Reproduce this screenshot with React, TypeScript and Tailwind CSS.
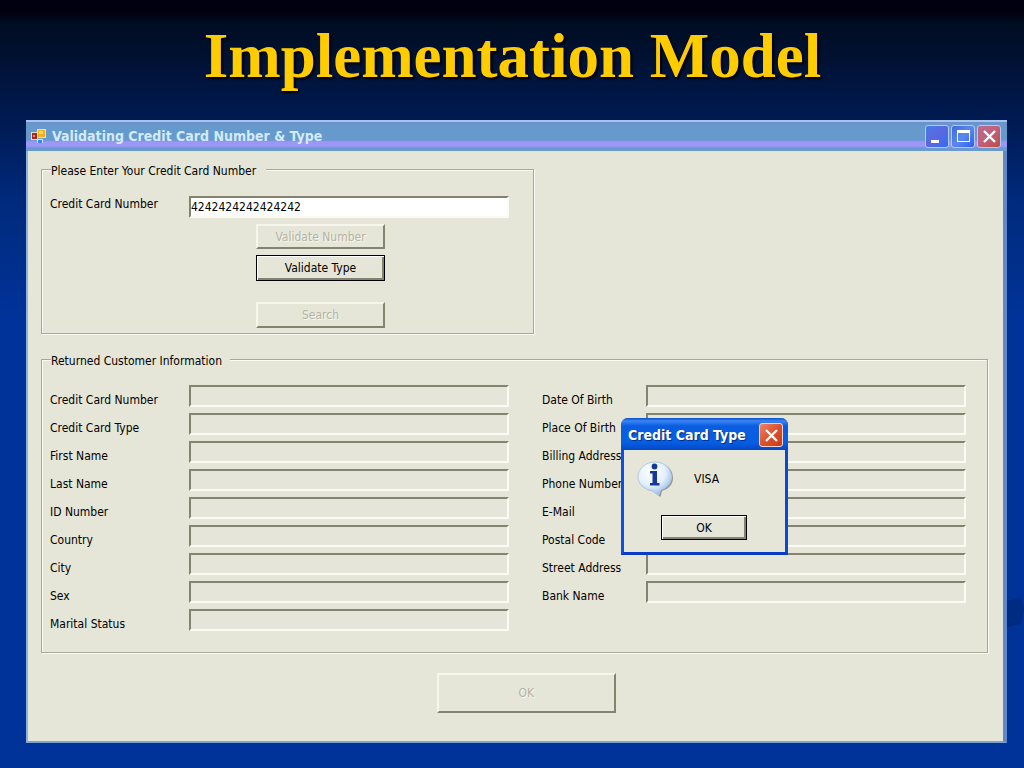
import React from "react";

const leftFields = [
  "Credit Card Number",
  "Credit Card Type",
  "First Name",
  "Last Name",
  "ID Number",
  "Country",
  "City",
  "Sex",
  "Marital Status",
];

const rightFields = [
  "Date Of Birth",
  "Place Of Birth",
  "Billing Address",
  "Phone Number",
  "E-Mail",
  "Postal Code",
  "Street Address",
  "Bank Name",
];

const sunken =
  "min-w-0 flex-1 h-[22px] border-2 border-t-[#85836f] border-l-[#85836f] border-r-[#fbfbf4] border-b-[#fbfbf4] outline-none";
const raised =
  "block border-2 border-t-[#f6f6ec] border-l-[#f6f6ec] border-r-[#85836f] border-b-[#85836f] bg-[#e6e6d8] text-[#b3b2a1] [text-shadow:1px_1px_0_#f8f8f0]";
const focused =
  "block border border-black bg-[#e6e6d8] text-black shadow-[inset_1px_1px_0_#fff,inset_-2px_-2px_0_#85836f]";
const group =
  "min-w-0 border border-[#a9a896] shadow-[1px_1px_0_#fafaf2,inset_1px_1px_0_#fafaf2]";
const legend = "ml-px bg-[#e6e6d8] pt-1 leading-[14px]";

function Field({ label, side, labelWidth }: { label: string; side: string; labelWidth: string }) {
  const id = side + "-" + label.toLowerCase().replace(/ /g, "-");
  return (
    <div className="flex h-7 items-start">
      <label htmlFor={id} className={"shrink-0 whitespace-nowrap pt-1 leading-[22px] " + labelWidth}>
        {label}
      </label>
      <input id={id} readOnly className={sunken + " bg-[#e6e5d9]"} />
    </div>
  );
}

function AppIcon() {
  return (
    <svg width="16" height="16" viewBox="0 0 16 16" aria-hidden="true">
      <rect x="0" y="3" width="7" height="8" fill="#e8dcd8" />
      <rect x="1" y="4" width="5" height="6" fill="#a82a20" />
      <rect x="2" y="6" width="2" height="2" fill="#e88070" />
      <rect x="6" y="0" width="9" height="9" fill="#f4e3a0" />
      <rect x="7" y="1" width="7" height="7" fill="#f0b020" />
      <rect x="8" y="2" width="4" height="3" fill="#ffdc60" />
      <rect x="6" y="10" width="6" height="4" fill="#cfe4ff" />
      <rect x="7" y="11" width="4" height="3" fill="#3a86e0" />
    </svg>
  );
}

const caption = "flex h-[23px] w-6 items-center justify-center rounded-[3px] border border-[#b4c8f0]";

export default function App() {
  return (
    <div className="relative min-h-screen overflow-hidden bg-[linear-gradient(180deg,#000010_0px,#000010_12px,#000c20_22px,#001a52_120px,#002a7c_200px,#003399_320px)] pb-[25px] pl-[26px] pr-[17px] font-['DejaVu_Sans_Condensed','DejaVu_Sans',sans-serif] text-[12px] text-black">
      <svg className="absolute right-0 top-[597px]" width="20" height="32" viewBox="0 0 20 32" aria-hidden="true">
        <path d="M0 5L17 0L20 12L17 27L0 31Z" fill="#002b82" />
      </svg>
      <h1 className="flex h-[120px] items-start justify-center pr-2 pt-[22px] text-center font-['Liberation_Serif',serif] text-[63px] font-bold leading-[68px] text-[#ffcc00] [text-shadow:2px_2px_2px_#000]">
        Implementation Model
      </h1>

      <main className="relative border-b-2 border-l-2 border-r-4 border-b-[#7da2d3] border-l-[#8db4dc] border-r-[#6088c8] bg-[#e6e6d8]">
        <header className="-ml-0.5 -mr-1 flex h-[31px] items-center border-t-2 border-t-[#a9c3ee] bg-[linear-gradient(180deg,#6a92cc_0px,#6699cc_5px,#6699cc_18px,#9f95fa_20px,#9a98f8_24px,#6b9ad0_26px,#6b9ad0_29px)] pl-[5px] pr-[6px]">
          <AppIcon />
          <h2 className="ml-[5px] flex-1 text-[14px] font-bold text-[#d3ebfb]">
            Validating Credit Card Number &amp; Type
          </h2>
          <div className="flex gap-0.5">
            <button aria-label="Minimize" className={caption + " bg-[linear-gradient(135deg,#4a78e8,#5a68e0_50%,#2d6ff5)]"}>
              <svg width="17" height="17" viewBox="0 0 17 17"><path d="M2 12h8v3H2z" fill="#fff" /></svg>
            </button>
            <button aria-label="Maximize" className={caption + " bg-[linear-gradient(135deg,#3f68e0,#5a88ee_50%,#2d5ff0)]"}>
              <svg width="17" height="17" viewBox="0 0 17 17"><path d="M2 2h13v12H2zM3 5v8h11V5z" fill="#fff" fillRule="evenodd" /></svg>
            </button>
            <button aria-label="Close" className={caption + " bg-[linear-gradient(135deg,#b86a90,#c2607a_50%,#b85040)]"}>
              <svg width="17" height="17" viewBox="0 0 17 17"><path d="M3 3L14 14M14 3L3 14" stroke="#fff" strokeWidth="2.4" /></svg>
            </button>
          </div>
        </header>

        <form className="pb-7 pl-[13px] pr-[15px] pt-[9px]" onSubmit={(e) => e.preventDefault()}>
          <fieldset className={group + " w-[52.1%] pb-[5px] pl-2 pr-6"}>
            <legend className={legend + " pr-[10px]"}>Please Enter Your Credit Card Number</legend>
            <div className="mt-[18px] flex items-start">
              <label htmlFor="card" className="w-[139px] shrink-0 whitespace-nowrap leading-4">Credit Card Number</label>
              <input id="card" defaultValue="4242424242424242" className={sunken + " bg-white"} />
            </div>
            <div className="ml-[206px] flex flex-col">
              <button disabled className={raised + " mt-1.5 h-[25px] w-[129px]"}>Validate Number</button>
              <button className={focused + " mt-1.5 h-[26px] w-[129px]"}>Validate Type</button>
              <button disabled className={raised + " mt-[21px] h-[26px] w-[129px]"}>Search</button>
            </div>
          </fieldset>

          <fieldset className={group + " mt-4 pb-[15px] pl-2 pr-[21px]"}>
            <legend className={legend + " pr-2"}>Returned Customer Information</legend>
            <div className="mt-[17px] flex gap-[33px]">
              <div className="flex-[459_1_0%]">
                {leftFields.map((f) => (
                  <Field key={f} label={f} side="left" labelWidth="w-[139px]" />
                ))}
              </div>
              <div className="flex-[424_1_0%]">
                {rightFields.map((f) => (
                  <Field key={f} label={f} side="right" labelWidth="w-[104px]" />
                ))}
              </div>
            </div>
          </fieldset>

          <button disabled className={raised + " ml-[41.8%] mt-5 h-10 w-[179px]"}>OK</button>
        </form>

        <section
          role="dialog"
          aria-label="Credit Card Type"
          className="absolute left-[593px] top-[298px] w-[167px] rounded-t-[7px] border-b-[3px] border-l-[3px] border-r-[3px] border-b-[#0a3cc8] border-l-[#0a50e8] border-r-[#0a48d8] bg-[#e6e6d8]"
        >
          <header className="-mx-[3px] flex h-8 items-center rounded-t-[7px] bg-[linear-gradient(180deg,#0a50c8_0px,#3a84f4_3px,#0a5ce0_8px,#0660e4_24px,#0448c4_32px)] pl-[7px] pr-[5px] pt-0.5">
            <h3 className="flex-1 whitespace-nowrap text-[14px] font-bold text-white [text-shadow:1px_1px_1px_#0a2a80]">Credit Card Type</h3>
            <button aria-label="Close message" className="flex h-6 w-6 items-center justify-center rounded-[3px] border border-[#f4d4d0] bg-[linear-gradient(135deg,#ec8468,#dc5030_50%,#c83c18)]">
              <svg width="17" height="17" viewBox="0 0 17 17"><path d="M3 3L14 14M14 3L3 14" stroke="#fff" strokeWidth="2.4" /></svg>
            </button>
          </header>
          <div className="flex items-start pl-3 pt-[10px]">
            <svg width="40" height="38" viewBox="0 0 40 38" aria-hidden="true">
              <defs>
                <radialGradient id="bubble" cx="40%" cy="30%" r="75%">
                  <stop offset="0" stopColor="#ffffff" />
                  <stop offset="0.55" stopColor="#e4f0fc" />
                  <stop offset="1" stopColor="#8fb4e4" />
                </radialGradient>
              </defs>
              <path d="M20 3C30 3 37 9 37 18C37 24 33 29 26 31L24.500 37L16 31C9 30 4 25 4 18C4 9 11 3 20 3Z" fill="#7c828c" opacity="0.8" />
              <path d="M19 2C29 2 35.500 9 35.500 17C35.500 23 31 28 24.500 30L22.500 35.500L16 30.500C8 29.500 2 24 2 17C2 9 9 2 19 2Z" fill="url(#bubble)" stroke="#b4c8e0" strokeWidth="1" />
              <circle cx="18.500" cy="6.500" r="2.900" fill="#14399c" />
              <path d="M14 11H21V23H23.500V25.500H14V23H16.500V13.500H14Z" fill="#14399c" />
            </svg>
            <p className="ml-[18px] mt-[10px] leading-[18px]">VISA</p>
          </div>
          <button className={focused + " mb-3 ml-[37px] mt-[17px] h-[25px] w-[86px]"}>OK</button>
        </section>
      </main>
    </div>
  );
}
